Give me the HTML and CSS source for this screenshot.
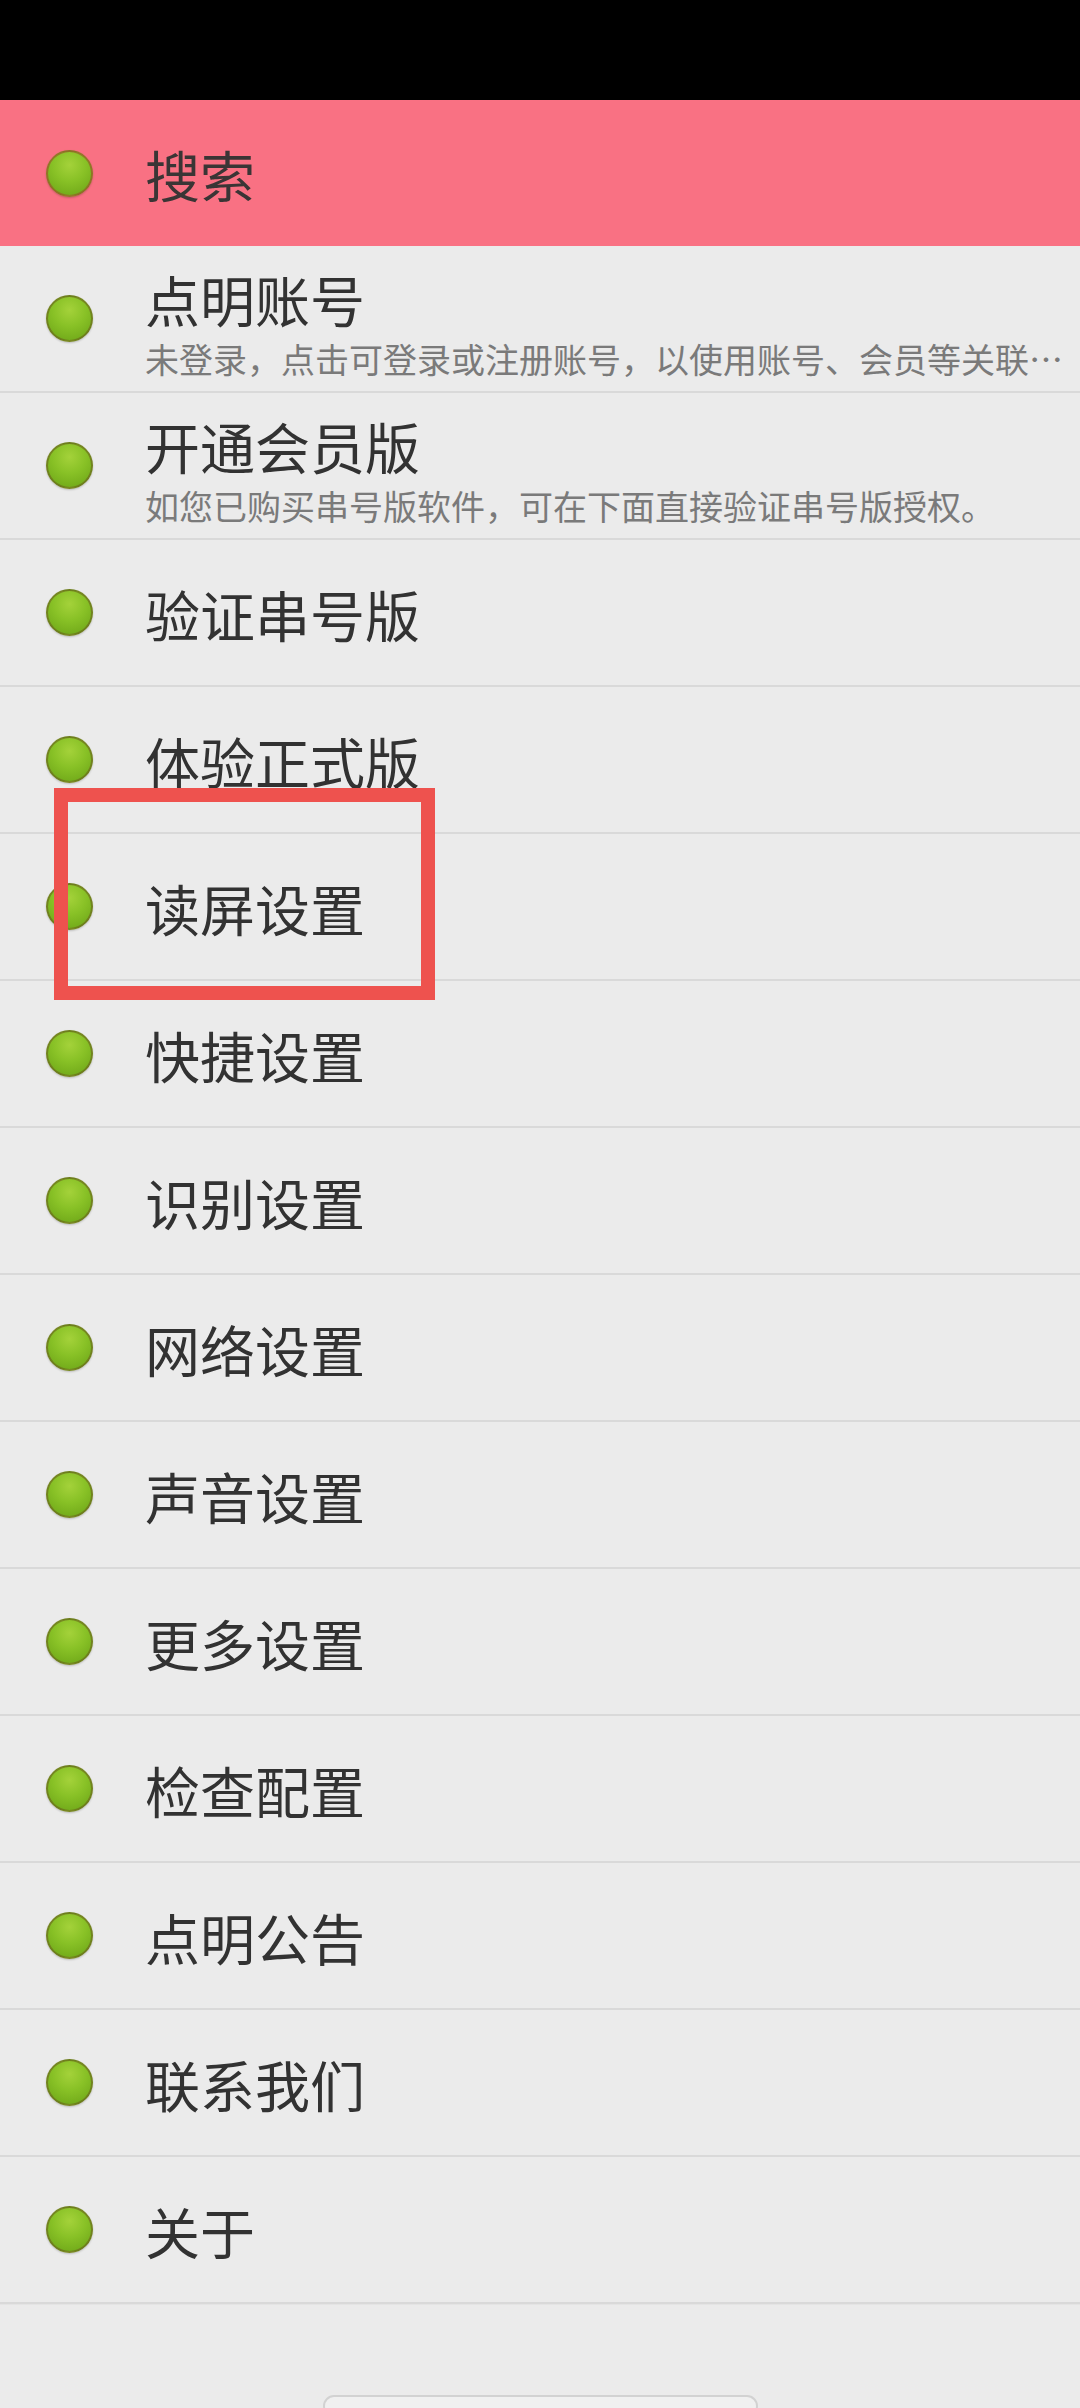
FILE: index.html
```html
<!DOCTYPE html>
<html lang="zh-CN">
<head>
<meta charset="utf-8">
<title>点明</title>
<link rel="stylesheet" href="styles.css">
</head>
<body>
<div class="screen">
  <div class="status-bar"></div>

  <div class="item item-active">
    <span class="dot"></span>
    <div class="text"><div class="title">搜索</div></div>
  </div>

  <ul class="menu">
    <li class="item has-sub">
      <span class="dot"></span>
      <div class="text">
        <div class="title">点明账号</div>
        <div class="sub">未登录，点击可登录或注册账号，以使用账号、会员等关联功能。</div>
      </div>
    </li>
    <li class="item has-sub">
      <span class="dot"></span>
      <div class="text">
        <div class="title">开通会员版</div>
        <div class="sub">如您已购买串号版软件，可在下面直接验证串号版授权。</div>
      </div>
    </li>
    <li class="item"><span class="dot"></span><div class="text"><div class="title">验证串号版</div></div></li>
    <li class="item"><span class="dot"></span><div class="text"><div class="title">体验正式版</div></div></li>
    <li class="item">
      <span class="dot"></span>
      <div class="text"><div class="title">读屏设置</div></div>
      <span class="highlight-box"></span>
    </li>
    <li class="item"><span class="dot"></span><div class="text"><div class="title">快捷设置</div></div></li>
    <li class="item"><span class="dot"></span><div class="text"><div class="title">识别设置</div></div></li>
    <li class="item"><span class="dot"></span><div class="text"><div class="title">网络设置</div></div></li>
    <li class="item"><span class="dot"></span><div class="text"><div class="title">声音设置</div></div></li>
    <li class="item"><span class="dot"></span><div class="text"><div class="title">更多设置</div></div></li>
    <li class="item"><span class="dot"></span><div class="text"><div class="title">检查配置</div></div></li>
    <li class="item"><span class="dot"></span><div class="text"><div class="title">点明公告</div></div></li>
    <li class="item"><span class="dot"></span><div class="text"><div class="title">联系我们</div></div></li>
    <li class="item"><span class="dot"></span><div class="text"><div class="title">关于</div></div></li>
  </ul>

  <div class="gesture-area"><span class="gesture-pill"></span></div>
</div>
</body>
</html>
```
FILE: styles.css
```css
html, body {
  margin: 0;
  padding: 0;
}

body {
  background: #ebebeb;
  font-family: "Noto Sans CJK SC", "Noto Sans", sans-serif;
  color: #333333;
}

.screen {
  width: 1080px;
  height: 2408px;
  overflow: hidden;
  display: flex;
  flex-direction: column;
  background: #ebebeb;
}

.status-bar {
  height: 100px;
  background: #000000;
  flex-shrink: 0;
}

.menu {
  list-style: none;
  margin: 0;
  padding: 0;
}

.item {
  position: relative;
  box-sizing: border-box;
  height: 147px;
  display: flex;
  align-items: center;
  padding: 0 8px 0 46px;
  border-bottom: 2px solid #d9d9d9;
}

.item-active {
  height: 146px;
  background: #f97183;
  border-bottom: none;
  flex-shrink: 0;
}

.dot {
  flex-shrink: 0;
  box-sizing: border-box;
  width: 47px;
  height: 47px;
  border-radius: 50%;
  background: radial-gradient(circle at 50% 30%, #a4d23a 0%, #88c126 45%, #6aa216 100%);
  border: 2px solid rgba(105, 95, 30, 0.6);
  box-shadow: 0 1px 2px rgba(0, 0, 0, 0.2);
  margin-right: 52px;
}

.item-active .dot {
  border-color: rgba(150, 90, 40, 0.7);
}

.text {
  min-width: 0;
  flex: 1;
  display: flex;
  flex-direction: column;
}

.has-sub .text {
  padding-top: 19px;
}

.title {
  font-size: 55px;
  line-height: 62px;
  color: #323232;
  white-space: nowrap;
}

.item-active .title {
  color: #3a3535;
}

.sub {
  font-size: 34px;
  line-height: 60px;
  color: #7a7a7a;
  white-space: nowrap;
  overflow: hidden;
  text-overflow: ellipsis;
}

/* red outline drawn over the 读屏设置 entry */
.highlight-box {
  position: absolute;
  z-index: 2;
  box-sizing: border-box;
  left: 54px;
  top: -46px;
  width: 381px;
  height: 212px;
  border: 14px solid #ee524e;
  pointer-events: none;
}

.gesture-area {
  flex: 1;
  display: flex;
  justify-content: center;
  align-items: flex-end;
  overflow: hidden;
  border-top: 1px solid #e4e4e4;
}

.gesture-pill {
  box-sizing: border-box;
  width: 435px;
  height: 22px;
  margin-bottom: -9px;
  border-radius: 11px;
  background: #f0f0f0;
  border: 2px solid #d2d2d2;
}
```
